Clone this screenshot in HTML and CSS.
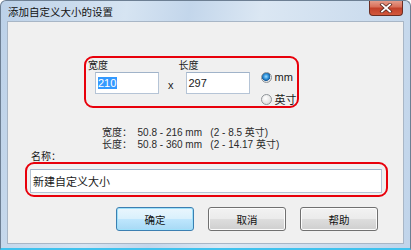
FILE: index.html
```html
<!DOCTYPE html>
<html lang="zh-CN">
<head>
  <meta charset="UTF-8" />
  <title>添加自定义大小的设置</title>
  <link rel="stylesheet" href="styles.css">
</head>
<body>
  <div class="window">
    <div class="titlebar">
      <span class="title">添加自定义大小的设置</span>
      <span class="close">
        <svg width="14" height="10" viewBox="0 0 14 10">
          <path d="M3 1.5 L11 8.5 M11 1.5 L3 8.5" stroke="#5b2a22" stroke-width="3.4" stroke-linecap="square"/>
          <path d="M3 1.5 L11 8.5 M11 1.5 L3 8.5" stroke="#fff" stroke-width="1.8" stroke-linecap="square"/>
        </svg>
      </span>
    </div>

    <div class="client">
      <div class="size-group">
        <div class="field">
          <div class="field-label">宽度</div>
          <div class="textbox"><span class="selected">210</span></div>
        </div>
        <span class="times">x</span>
        <div class="field field-second">
          <div class="field-label">长度</div>
          <div class="textbox">297</div>
        </div>
        <div class="units">
          <div class="radio-row"><span class="radio checked"></span>mm</div>
          <div class="radio-row"><span class="radio"></span>英寸</div>
        </div>
      </div>

      <div class="ranges">
        <div class="range-line">宽度：  50.8 - 216 mm   (2 - 8.5 英寸)</div>
        <div class="range-line">长度：  50.8 - 360 mm   (2 - 14.17 英寸)</div>
      </div>

      <div class="name-label">名称：</div>
      <div class="name-group">
        <div class="textbox wide">新建自定义大小</div>
      </div>

      <div class="buttons">
        <button class="btn default">确定</button>
        <button class="btn">取消</button>
        <button class="btn">帮助</button>
      </div>
    </div>
  </div>
</body>
</html>
```

FILE: styles.css
```css
body {
  margin: 0;
  font-family: "Liberation Sans", "Noto Sans CJK SC", sans-serif;
  font-size: 10px;
  color: #1a1a1a;
  background: #fff;
}

.window {
  width: 411px;
  height: 250px;
  box-sizing: border-box;
  border: 1px solid #6d7f93;
  border-bottom: 2px solid #3fc2ee;
  border-radius: 6px 6px 0 0;
  background: linear-gradient(100deg, #bcd1e8 0%, #d6e4f2 28%, #c3d6eb 42%, #dbe7f3 58%, #c0d4ea 100%);
  overflow: hidden;
}

.titlebar {
  height: 20px;
  display: flex;
  justify-content: space-between;
  align-items: flex-start;
}

.title {
  margin: 5px 0 0 7px;
  font-size: 10.5px;
  line-height: 12px;
  color: #111;
}

.close {
  width: 34px;
  height: 16px;
  margin: -1px 7px 0 0;
  box-sizing: border-box;
  border: 1px solid #6b2d22;
  border-top: none;
  border-radius: 0 0 4px 4px;
  background: linear-gradient(#e6a493 0%, #d9705a 45%, #c2412a 55%, #d2583d 100%);
  display: flex;
  align-items: center;
  justify-content: center;
}

.client {
  height: 223px;
  margin: 0 6px;
  box-sizing: border-box;
  border: 1px solid #a8b6c6;
  background: #f0f0f0;
  overflow: hidden;
}

.size-group {
  width: 215px;
  height: 52px;
  margin: 34px 0 0 76px;
  box-sizing: border-box;
  border: 2px solid #e8000b;
  border-radius: 9px;
  display: flex;
  align-items: flex-start;
  padding: 1px 0 0 2px;
}

.field-label {
  line-height: 13px;
}

.field .textbox {
  margin-left: 7px;
  width: 64px;
  height: 22px;
}

.field-second {
  margin-left: 5px;
}

.textbox {
  box-sizing: border-box;
  background: #fff;
  border: 1px solid #b5c4d6;
  border-top-color: #a0b3c9;
  padding: 0 2px;
  display: flex;
  align-items: center;
  font-size: 11px;
}

.selected {
  background: #3399ff;
  color: #fff;
  padding-right: 1px;
}

.times {
  margin: 19px 0 0 9px;
  line-height: 14px;
  font-size: 11px;
}

.units {
  margin: 11px 0 0 11px;
  display: flex;
  flex-direction: column;
  gap: 8px;
}

.radio-row {
  display: flex;
  align-items: center;
  height: 14px;
  gap: 3px;
  font-size: 11px;
}

.radio {
  width: 11px;
  height: 11px;
  box-sizing: border-box;
  border-radius: 50%;
  border: 1px solid #8f9499;
  background: radial-gradient(circle at 40% 35%, #fff 0%, #e6e6e6 60%, #cfcfcf 100%);
}

.radio.checked {
  background: radial-gradient(circle at 45% 40%, #9fdcff 0%, #2c8fd8 35%, #1a5d9c 55%, #e4e4e4 62%, #d2d2d2 100%);
}

.ranges {
  margin: 19px 0 0 94px;
  color: #2a2a2a;
}

.range-line {
  height: 12px;
  line-height: 12px;
  white-space: pre;
}

.name-label {
  margin-left: 23px;
  height: 11px;
  line-height: 11px;
}

.name-group {
  width: 363px;
  height: 35px;
  margin-left: 17px;
  box-sizing: border-box;
  border: 2px solid #e8000b;
  border-radius: 9px;
  padding: 5px 0 0 3px;
}

.textbox.wide {
  width: 352px;
  height: 24px;
}

.buttons {
  display: flex;
  gap: 14px;
  margin: 10px 0 0 108px;
}

.btn {
  width: 78px;
  height: 24px;
  padding: 0;
  font-family: inherit;
  font-size: 10.5px;
  color: #111;
  border: 1px solid #707070;
  border-radius: 3px;
  background: linear-gradient(#f2f2f2 0%, #ebebeb 48%, #dddddd 52%, #cfcfcf 100%);
  box-shadow: inset 0 0 0 1px #fcfcfc;
}

.btn.default {
  border-color: #3c7fb1;
  background: linear-gradient(#eaf6fd 0%, #d9f0fc 48%, #bee6fd 52%, #a7d9f5 100%);
  box-shadow: inset 0 0 0 1px #9ee1fb;
}
```
